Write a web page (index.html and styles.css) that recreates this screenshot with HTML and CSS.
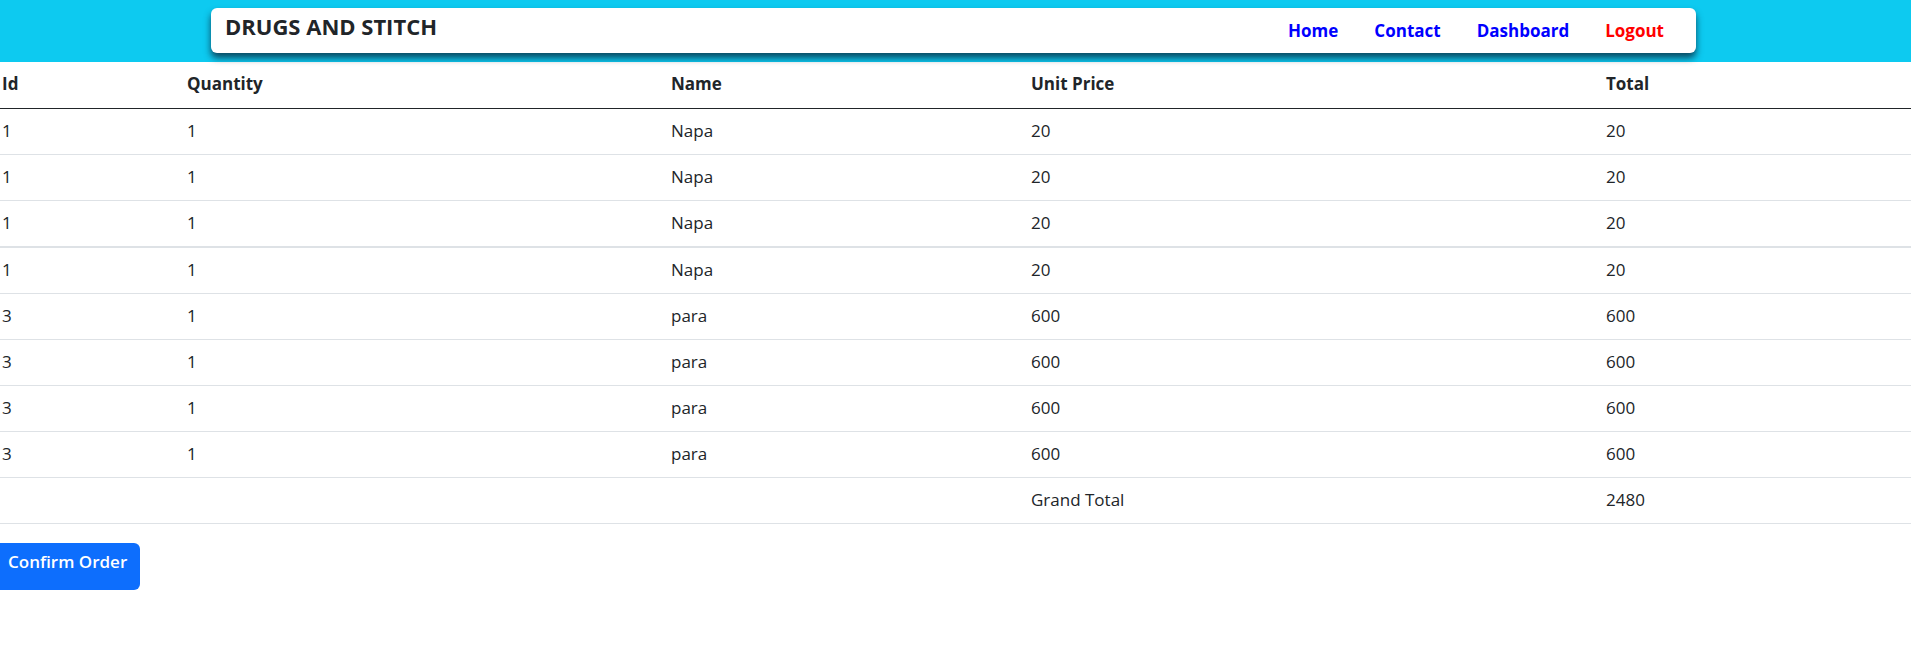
FILE: index.html
```html
<!DOCTYPE html>
<html lang="en">
<head>
<meta charset="utf-8">
<title>Drugs and Stitch - Cart</title>
<link rel="stylesheet" href="styles.css">
</head>
<body>
<header class="topbar">
  <nav class="navcard">
    <div class="brand">DRUGS AND STITCH</div>
    <ul class="links">
      <li><a class="link" href="#">Home</a></li>
      <li><a class="link" href="#">Contact</a></li>
      <li><a class="link" href="#">Dashboard</a></li>
      <li><a class="link logout" href="#">Logout</a></li>
    </ul>
  </nav>
</header>
<main>
  <table class="cart">
    <colgroup>
      <col class="c1"><col class="c2"><col class="c3"><col class="c4"><col class="c5">
    </colgroup>
    <thead>
      <tr><th>Id</th><th>Quantity</th><th>Name</th><th>Unit Price</th><th>Total</th></tr>
    </thead>
    <tbody>
      <tr><td>1</td><td>1</td><td>Napa</td><td>20</td><td>20</td></tr>
      <tr><td>1</td><td>1</td><td>Napa</td><td>20</td><td>20</td></tr>
      <tr class="thick"><td>1</td><td>1</td><td>Napa</td><td>20</td><td>20</td></tr>
      <tr><td>1</td><td>1</td><td>Napa</td><td>20</td><td>20</td></tr>
      <tr><td>3</td><td>1</td><td>para</td><td>600</td><td>600</td></tr>
      <tr><td>3</td><td>1</td><td>para</td><td>600</td><td>600</td></tr>
      <tr><td>3</td><td>1</td><td>para</td><td>600</td><td>600</td></tr>
      <tr><td>3</td><td>1</td><td>para</td><td>600</td><td>600</td></tr>
      <tr><td></td><td></td><td></td><td>Grand Total</td><td>2480</td></tr>
    </tbody>
  </table>
  <button class="confirm" type="button">Confirm Order</button>
</main>
</body>
</html>
```

FILE: styles.css
```css
* { box-sizing: border-box; }
html, body { margin: 0; padding: 0; }
body {
  font-family: "Open Sans", "Noto Sans", sans-serif;
  color: #212529;
  background: #fff;
  font-size: 17px;
}
.topbar {
  background: #0dcaf0;
  height: 62px;
  padding-top: 8px;
}
.navcard {
  margin-left: 211px;
  width: 1485px;
  height: 45px;
  background: #fff;
  border-radius: 6px;
  box-shadow: 0 5px 7px rgba(10, 30, 50, 0.75);
  display: flex;
  justify-content: space-between;
  align-items: flex-start;
  padding: 0 32px 0 14px;
}
.brand {
  font-weight: 700;
  font-size: 22px;
  line-height: 30px;
  margin-top: 3px;
  color: #212529;
}
.links {
  list-style: none;
  margin: 0;
  padding: 0;
  display: flex;
  gap: 36px;
  margin-top: 11px;
}
.link {
  font-weight: 700;
  font-size: 17px;
  line-height: 24px;
  color: #0000ff;
  text-decoration: none;
}
.link.logout { color: #ff0000; }

.cart {
  width: 100%;
  border-collapse: collapse;
  table-layout: fixed;
}
.c1 { width: 185px; }
.c2 { width: 484px; }
.c3 { width: 360px; }
.c4 { width: 575px; }
.cart th, .cart td {
  text-align: left;
  padding: 0 2px 1px;
  height: 46px;
  line-height: 44px;
  font-size: 17px;
  border-bottom: 1px solid #dee2e6;
}
.cart th {
  font-weight: 700;
  border-bottom: 1px solid #212529;
}
.cart tr.thick td { border-bottom: 2px solid #dee2e6; }
.confirm {
  margin-top: 19px;
  display: block;
  width: 140px;
  height: 47px;
  background: #0d6efd;
  color: #fff;
  border: none;
  border-radius: 0 6px 6px 0;
  font-family: inherit;
  font-size: 17px;
  font-weight: 600;
  text-align: left;
  padding: 0 0 10px 8px;
}
```
